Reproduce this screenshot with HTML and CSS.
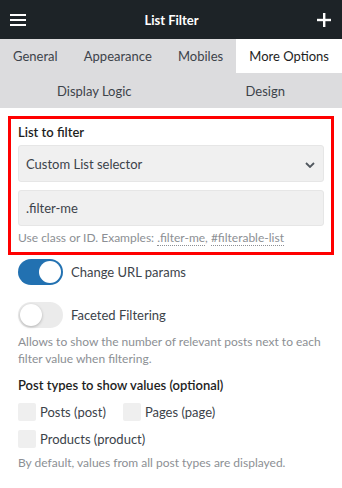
FILE: index.html
```html
<!DOCTYPE html>
<html lang="en">
<head>
    <meta charset="UTF-8">
    <meta name="viewport" content="width=device-width, initial-scale=1.0">
    <title>List Filter</title>
    <link rel="stylesheet" href="styles.css">
</head>
<body>

    <header class="topbar">
        <button class="icon-btn" aria-label="Menu">
            <svg class="icon" viewBox="0 0 16 14"><rect x="0" y="1" width="16" height="2"></rect><rect x="0" y="6" width="16" height="2"></rect><rect x="0" y="11" width="16" height="2"></rect></svg>
        </button>
        <h1>List Filter</h1>
        <button class="icon-btn" aria-label="Add">
            <svg class="icon" viewBox="0 0 14 14"><rect x="6" y="0" width="2.4" height="14"></rect><rect x="0" y="5.8" width="14" height="2.4"></rect></svg>
        </button>
    </header>

    <nav class="tabs">
        <a class="tab">General</a>
        <a class="tab">Appearance</a>
        <a class="tab">Mobiles</a>
        <a class="tab active">More Options</a>
        <a class="tab">Display Logic</a>
        <a class="tab">Design</a>
    </nav>

    <main class="panel">
        <section class="highlight">
            <label class="field-label">List to filter</label>
            <div class="select">
                <span>Custom List selector</span>
                <svg class="chevron" viewBox="0 0 10 6"><polyline points="1 1 5 5 9 1"></polyline></svg>
            </div>
            <div class="input">.filter-me</div>
            <p class="help">Use class or ID. Examples: <span class="dotted">.filter-me</span>, <span class="dotted">#filterable-list</span></p>
        </section>

        <div class="toggle-row">
            <span class="toggle on"><span class="knob"></span></span>
            <span>Change URL params</span>
        </div>

        <div class="toggle-row second">
            <span class="toggle"><span class="knob"></span></span>
            <span>Faceted Filtering</span>
        </div>
        <p class="help desc">Allows to show the number of relevant posts next to each filter value when filtering.</p>

        <h2 class="field-label heading">Post types to show values (optional)</h2>
        <div class="checks">
            <label class="check"><span class="box"></span>Posts (post)</label>
            <label class="check"><span class="box"></span>Pages (page)</label>
            <label class="check"><span class="box"></span>Products (product)</label>
        </div>
        <p class="help note">By default, values from all post types are displayed.</p>
    </main>

</body>
</html>
```

FILE: styles.css
```css
/* General */
body {
    margin: 0;
    font-family: 'Lato', 'Noto Sans', sans-serif;
    font-size: 13px;
    color: #1e1e1e;
    background: #ffffff;
}

/* Top bar */
.topbar {
    height: 39px;
    background-color: #1d2327;
    color: #ffffff;
    display: flex;
    align-items: center;
    justify-content: space-between;
    padding: 0 10px 0 10px;
}

.topbar h1 {
    margin: 0;
    font-size: 13px;
    font-weight: 700;
}

.icon-btn {
    background: none;
    border: 0;
    padding: 0;
    color: #ffffff;
    display: flex;
}

.icon-btn .icon {
    width: 16px;
    height: 14px;
    fill: currentColor;
}

.icon-btn:last-child .icon {
    width: 14px;
    margin-right: 1px;
}

/* Tabs */
.tabs {
    display: flex;
    flex-wrap: wrap;
    background-color: #dcdcde;
}

.tab {
    flex: 1 1 auto;
    text-align: center;
    padding: 0 13px;
    line-height: 34px;
    height: 34px;
    color: #3c434a;
    font-size: 13px;
}

.tab:nth-child(n+5) {
    height: 35px;
    line-height: 36px;
}

.tab.active {
    background-color: #ffffff;
    color: #1e1e1e;
}

/* Panel */
.panel {
    padding: 8px 8px 0;
}

.highlight {
    border: 3px solid #ff0000;
    padding: 3px 7px 6px;
}

.field-label {
    display: block;
    font-weight: 600;
    font-size: 13px;
    line-height: 20px;
    color: #1e1e1e;
    margin: 0 0 3px;
}

.select, .input {
    background-color: #f0f0f0;
    border: 1px solid #e6e6e6;
    border-radius: 3px;
    padding: 0 7px;
    color: #3c434a;
    display: flex;
    align-items: center;
}

.select {
    height: 35px;
    justify-content: space-between;
}

.input {
    height: 34px;
    margin-top: 8px;
}

.chevron {
    width: 10px;
    height: 6px;
    fill: none;
    stroke: #50575e;
    stroke-width: 1.8;
    margin: 2px 1px 0 0;
}

.help {
    margin: 4px 0 0;
    font-size: 12px;
    line-height: 16px;
    color: #8c8f94;
}

.dotted {
    border-bottom: 1px dotted #8c8f94;
}

/* Toggles */
.toggle-row {
    display: flex;
    align-items: center;
    gap: 8px;
    margin: 4px 10px 0;
    line-height: 26px;
    color: #3c434a;
}

.toggle-row.second {
    margin-top: 17px;
}

.toggle {
    width: 45px;
    height: 26px;
    border-radius: 13px;
    background-color: #ebebeb;
    display: flex;
    align-items: center;
    padding: 0 2px;
    box-sizing: border-box;
}

.toggle .knob {
    width: 22px;
    height: 22px;
    border-radius: 50%;
    background-color: #ffffff;
    box-shadow: 0 1px 3px rgba(0, 0, 0, 0.25);
}

.toggle.on {
    background-color: #2271b1;
    justify-content: flex-end;
}

.toggle.on .knob {
    box-shadow: none;
}

.desc {
    margin: 5px 10px 0;
    line-height: 17px;
}

/* Post types */
.heading {
    margin: 8px 10px 0;
}

.checks {
    display: flex;
    flex-wrap: wrap;
    gap: 7px 0;
    margin: 7px 10px 0;
    width: 220px;
}

.check {
    display: flex;
    align-items: center;
    gap: 4px;
    line-height: 20px;
    color: #3c434a;
    margin-right: 17px;
}

.box {
    width: 18px;
    height: 18px;
    background-color: #efefef;
    border-radius: 2px;
}

.note {
    margin: 6px 10px 0;
}
```
